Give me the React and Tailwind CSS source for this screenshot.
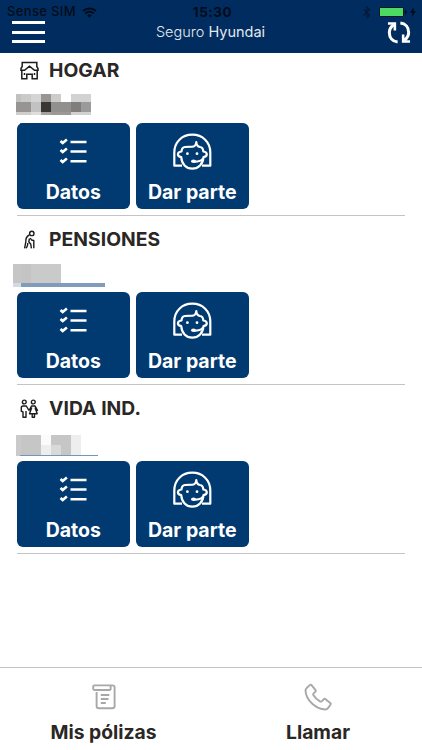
const HouseIcon = () => (
  <svg className="h-[19px] w-[19px]" viewBox="0 0 19 19" fill="none" stroke="#1c1c1c" strokeWidth="1.500">
    <path d="M2.200 5.500V1.500h14.600v4L18 7.500v1.800h-3.500L9.500 5.200l-5 4.100H1V7.500z" />
    <path d="M1.800 9.300v8.400h5v-4.400h5.400v4.400h5V9.300" />
    <path d="M4.500 12v2M14.500 12v2" />
  </svg>
)

const WalkerIcon = () => (
  <svg className="h-[19px] w-[19px]" viewBox="0 0 19 19" fill="none" stroke="#1c1c1c" strokeWidth="1.400" strokeLinejoin="round">
    <circle cx="11.800" cy="3.400" r="2.200" />
    <path d="M9.300 5C6.800 6.200 5.500 8.500 5.800 12L4.600 18.300M9.500 8.500l-.7 3.200 2 2.600.6 4M7.800 13l-.3 2.500-1.300 2.800" />
    <path d="M10.300 8l1.200 2 2.300.5V18.300" />
  </svg>
)

const CoupleIcon = () => (
  <svg className="h-[19px] w-[19px]" viewBox="0 0 19 19" fill="none" stroke="#1c1c1c" strokeWidth="1.400" strokeLinejoin="round">
    <circle cx="4.300" cy="3" r="1.900" />
    <circle cx="13.300" cy="3" r="1.900" />
    <path d="M9 11.500L6.300 7H3C1.800 7 1.300 7.600 1.300 8.800v3.400l1.700.8v5.200h3V12" />
    <path d="M9 11.500L11.500 7h3.600l2.600 4.800M11.800 8.500L9.500 14.800h7.700L15 8.500M12.200 15v3.200h2.300V15" />
  </svg>
)

const ChecklistIcon = () => (
  <svg className="h-[26px] w-[28px]" viewBox="0 0 28 26" fill="none" stroke="#fff">
    <path strokeWidth="2.600" d="M1.500 3l2.200 2L7.900 1.500M1.500 12l2.200 2 4.200-3.600M1.500 22l2.200 2 4.200-3.600" />
    <path strokeWidth="2.400" d="M11.500 4h16M11.500 13.500h16M11.500 23.300h16" />
  </svg>
)

const AgentIcon = () => (
  <svg className="h-[37px] w-[40px]" viewBox="0 0 40 37" fill="none" stroke="#fff" strokeWidth="2.200" strokeLinejoin="round">
    <path d="M10 32.700H2.300V19.500C2.300 9 10 1.700 20.300 1.700S38.300 9 38.300 19.500v13.200H30" />
    <path d="M24.300 9c-.3 3-1.300 4.500-3.800 4.700L13 14c-2.300.2-3.300 1.500-3.500 4.500-2.500.3-3.600 1.200-3.600 2.800s1.100 2.500 3.300 2.800C9.700 31 14 35.600 20.300 35.600S31 31 31.500 24.100c2.200-.3 3.300-1.200 3.300-2.800s-1.100-2.500-3.500-2.800c-.2-3-1-4.300-3.300-4.500-2.500-.3-3.500-2-3.700-5z" />
    <path d="M31 25.500c-1.500 2.700-5 3.200-9 3.200" />
    <ellipse cx="21.500" cy="28.200" rx="2.500" ry="1.700" fill="#fff" stroke="none" />
    <circle cx="15.400" cy="20.700" r="1.400" fill="#fff" stroke="none" />
    <circle cx="25" cy="20.700" r="1.400" fill="#fff" stroke="none" />
  </svg>
)

const PolicyIcon = () => (
  <svg className="h-[26px] w-[24px]" viewBox="0 0 24 26" fill="none" stroke="#a8a8a8" strokeWidth="1.900" strokeLinejoin="round">
    <path d="M18.600 6H2.800C1.700 6 1.200 5.500 1.200 4.500V2.800c0-.9.500-1.400 1.300-1.400h17.800c1.400 0 2.300.8 2.300 2.100v18.700c0 1.400-.9 2.100-2.300 2.100H7c-1.400 0-2.400-.7-2.400-2.100V8M18.600 6V2" />
    <path d="M8.800 11h8.500M8.800 15h7.700M8.800 19h5" />
  </svg>
)

const PhoneIcon = () => (
  <svg className="h-[28px] w-[28px]" viewBox="0 0 28 28" fill="none" stroke="#a8a8a8" strokeWidth="1.900" strokeLinejoin="round">
    <path d="M5.800 2.100c.7-.5 1.400-.4 1.900.2l3.700 4.600c.5.700.4 1.400-.2 2L9.600 10.400c-.6.600-.5 1.200-.1 1.900 1.500 2.500 3.600 4.500 6.500 6.100.7.400 1.300.3 1.900-.3l1.700-1.800c.6-.6 1.300-.6 2-.1l4.600 3.700c.6.500.7 1.200.2 1.900l-2.400 3.300c-.7 1-1.500 1.400-2.700 1.400C11.800 26 2 17.200 1.500 7.600c0-1.200.4-2 1.400-2.900z" />
  </svg>
)

const SyncIcon = () => (
  <svg className="h-[23px] w-[24px]" viewBox="0 0 26 25" fill="none" stroke="#fff" strokeWidth="3.300">
    <path d="M11.500 22.800C6 22.300 2.500 18 2.500 12.500c0-3.300 1.500-6 4.700-8.500" />
    <path d="M14.500 2.200c5.500.5 9 4.800 9 10.300 0 3.300-1.500 6-4.700 8.500" />
    <path strokeWidth="2.800" d="M1 2.800h7.500v7.500M25 22.200h-7.500v-7.500" />
  </svg>
)

// each row is a strip of [width, colour] cells
const sections = [
  {
    title: 'HOGAR',
    icon: <HouseIcon />,
    box: 'h-[163px] pt-[6px]',
    redacted: 'left-4 top-[13px]',
    underline: 'left-5 top-[42px] h-px w-[106px] bg-[#3f6c98]',
    rows: [
      { height: 8, cells: [[5, '#c2c1c1'], [10, '#cbcaca'], [10, '#d5d5d5'], [10, '#979695'], [10, '#cdcccb'], [10, '#ffffff'], [20, '#d2d2d2']] },
      { height: 10, cells: [[15, '#969594'], [10, '#c3c2c2'], [10, '#393733'], [20, '#92908f'], [10, '#7f7e7c'], [10, '#9b9a9a']] },
      { height: 3, cells: [[15, '#cfcecd'], [10, '#dddddd'], [10, '#a3a2a1'], [20, '#9a9998'], [20, '#d1d1d1']] },
    ],
  },
  {
    title: 'PENSIONES',
    icon: <WalkerIcon />,
    box: 'h-[169px] pt-3',
    redacted: 'left-[13px] top-[14px]',
    underline: 'left-[21px] top-[33px] h-[4px] w-[84px] bg-[#7f9dba]',
    rows: [
      { height: 19, cells: [[8, '#c6c6c6'], [10, '#c4c4c4'], [30, '#cacaca']] },
      { height: 4, cells: [[8, '#d2dbe5']] },
    ],
  },
  {
    title: 'VIDA IND.',
    icon: <CoupleIcon />,
    box: 'h-[169px] pt-3',
    redacted: 'left-4 top-[16px]',
    underline: 'left-5 top-[36px] h-px w-[78px] bg-[#7297b9]',
    rows: [
      { height: 10, cells: [[5, '#cbcaca'], [20, '#c7c6c6'], [10, '#fbfbfb'], [20, '#c7c6c6'], [10, '#eeeeee']] },
      { height: 11, cells: [[5, '#cbcaca'], [20, '#c7c6c6'], [10, '#eeeeee'], [10, '#dad9d9'], [10, '#c7c6c6'], [10, '#eeeeee']] },
    ],
  },
]

function StatusBar() {
  return (
    <div className="flex h-[22px] items-center justify-between pl-[7px] pr-[6px] pt-[2px] text-[13px] text-[#020c1a]">
      <div className="flex w-[140px] items-center gap-[6px]">
        <span className="font-medium tracking-[0.35px]">Sense SIM</span>
        <svg className="h-[11px] w-[15px]" viewBox="0 0 15 11" fill="none" stroke="currentColor" strokeWidth="1.900">
          <path d="M1 4a9.500 9.500 0 0 1 13 0M3.300 6.500a6 6 0 0 1 8.400 0" />
          <path d="M7.500 10.800L5.300 8.500a3 3 0 0 1 4.400 0z" fill="currentColor" stroke="none" />
        </svg>
      </div>
      <span className="pl-[2px] text-[13.500px] font-bold tracking-[0.5px]">15:30</span>
      <div className="flex w-[140px] items-center justify-end">
        <svg className="mr-[8px] h-[13px] w-[8px]" viewBox="0 0 8 13" fill="none" stroke="#061a38" strokeWidth="1.200">
          <path d="M.8 3.500l6 6L4 12V1l2.800 2.500-6 6" />
        </svg>
        <div className="h-[10px] w-[25px] rounded-[1px] border border-[#06162b] bg-[#4cd964]" />
        <span className="ml-px h-1 w-[2px] rounded-r-full bg-[#03101f]" />
        <svg className="ml-[3px] h-[10px] w-[6px]" viewBox="0 0 6 10" fill="currentColor">
          <path d="M4 0L0 5.800h2.500L1.800 10 6 4H3.400z" />
        </svg>
      </div>
    </div>
  )
}

function Header() {
  return (
    <header className="h-[53px] bg-[#002c5f]">
      <StatusBar />
      <div className="flex h-[24px] items-start justify-between pl-[12px] pr-[11px]">
        <div className="flex w-[33px] flex-col gap-[6.500px] -mt-px">
          <span className="h-[3px] bg-white" />
          <span className="h-[3px] bg-white" />
          <span className="h-[3px] bg-white" />
        </div>
        <h1 className="pr-px text-[14.500px] font-light leading-5 text-[#e3e9f0]">
          Seguro <span className="font-normal">Hyundai</span>
        </h1>
        <div className="flex w-[34px] justify-end -mt-px">
          <SyncIcon />
        </div>
      </div>
    </header>
  )
}

function ActionButton({ icon, label }) {
  return (
    <button className="flex h-[86px] w-[112.500px] flex-col items-center rounded-[6px] bg-[#003a70] text-white">
      <span className="flex h-[56px] items-center">{icon}</span>
      <span className="text-[19.500px] font-bold leading-[27px]">{label}</span>
    </button>
  )
}

function PolicySection({ section }) {
  return (
    <section className={section.box}>
      <h2 className="flex h-[22px] items-center gap-[10px] pl-5 text-[19.300px] font-bold tracking-[0.05px] text-[#2a2725]">
        {section.icon}
        {section.title}
      </h2>
      <div className="relative h-[42px]">
        <div className={`absolute ${section.redacted}`}>
          {section.rows.map((row, i) => (
            <div key={i} className="flex" style={{ height: row.height }}>
              {row.cells.map(([width, color], j) => (
                <span key={j} style={{ width, backgroundColor: color }} />
              ))}
            </div>
          ))}
        </div>
        <div className={`absolute ${section.underline}`} />
      </div>
      <div className="relative mx-[17px] flex gap-[6.500px] border-b border-[#c4c4c8] pb-[6px]">
        <ActionButton icon={<ChecklistIcon />} label="Datos" />
        <ActionButton icon={<AgentIcon />} label="Dar parte" />
      </div>
    </section>
  )
}

function Tab({ icon, label, className }) {
  return (
    <button className={`flex shrink-0 flex-col items-center ${className}`}>
      <span className="flex h-[30px] items-center">{icon}</span>
      <span className="mt-[7px] text-[19.300px] font-bold leading-[26px] text-[#2a2725]">{label}</span>
    </button>
  )
}

export default function App() {
  return (
    <div className="flex h-[750px] w-[422px] flex-col overflow-hidden bg-white font-['Inter',sans-serif]">
      <Header />
      <main className="flex-1">
        {sections.map((section) => (
          <PolicySection key={section.title} section={section} />
        ))}
      </main>
      <nav className="flex h-[83px] border-t border-[#c4c4c8] pt-[14px]">
        <Tab icon={<PolicyIcon />} label="Mis pólizas" className="w-[207px]" />
        <Tab icon={<PhoneIcon />} label="Llamar" className="w-[222px]" />
      </nav>
    </div>
  )
}
